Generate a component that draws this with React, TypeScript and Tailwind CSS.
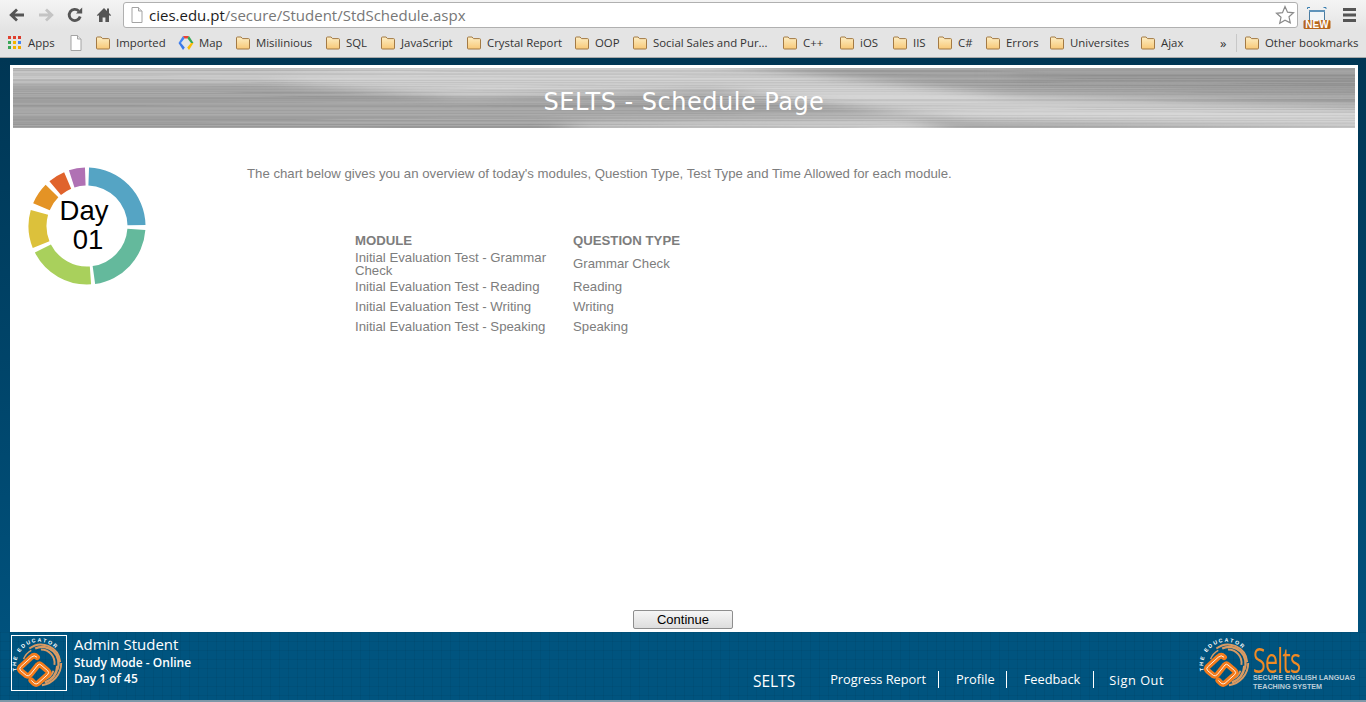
import React from 'react';

const bookmarks = [
  { label: 'Imported', cls: 'w-[83px]' },
  { label: 'Map', cls: 'w-[57px]', map: true },
  { label: 'Misilinious', cls: 'w-[90px]' },
  { label: 'SQL', cls: 'w-[55px]' },
  { label: 'JavaScript', cls: 'w-[86px]' },
  { label: 'Crystal Report', cls: 'w-[108px]' },
  { label: 'OOP', cls: 'w-[58px]' },
  { label: 'Social Sales and Pur...', cls: 'w-[150px]' },
  { label: 'C++', cls: 'w-[57px]' },
  { label: 'iOS', cls: 'w-[53px]' },
  { label: 'IIS', cls: 'w-[45px]' },
  { label: 'C#', cls: 'w-[48px]' },
  { label: 'Errors', cls: 'w-[64px]' },
  { label: 'Universites', cls: 'w-[91px]' },
  { label: 'Ajax', cls: 'w-[80px]' },
];

const rows = [
  { module: 'Initial Evaluation Test - Grammar Check', type: 'Grammar Check' },
  { module: 'Initial Evaluation Test - Reading', type: 'Reading' },
  { module: 'Initial Evaluation Test - Writing', type: 'Writing' },
  { module: 'Initial Evaluation Test - Speaking', type: 'Speaking' },
];

const segments = [
  { from: 2, to: 89, color: '#55a4c4' },
  { from: 94, to: 172, color: '#64b99c' },
  { from: 176, to: 243, color: '#a9d05c' },
  { from: 248, to: 286, color: '#dcc13b' },
  { from: 293, to: 315, color: '#e49325' },
  { from: 320, to: 337, color: '#e0632c' },
  { from: 342, to: 358, color: '#b071b4' },
];

const Folder = () => (
  <svg width="16" height="14" viewBox="0 0 16 14" className="shrink-0">
    <defs>
      <linearGradient id="fold" x1="0" y1="0" x2="0" y2="1">
        <stop offset="0" stopColor="#fdeec4" />
        <stop offset="1" stopColor="#f8c877" />
      </linearGradient>
    </defs>
    <path d="M1.5 3V2a1 1 0 0 1 1-1h3.600l1.400 1.600h6a1 1 0 0 1 1 1v8.400a1 1 0 0 1-1 1h-11a1 1 0 0 1-1-1z" fill="url(#fold)" stroke="#a37a45" />
  </svg>
);

const Page = ({ size = 16 }: { size?: number }) => (
  <svg width={size - 4} height={size} viewBox="0 0 12 16" className="shrink-0">
    <path d="M1 .5h6.500L11 4v11.500H1z" fill="#fff" stroke="#a3a3a3" />
    <path d="M7.500.5V4H11" fill="#e8e8e8" stroke="#a3a3a3" />
  </svg>
);

const AppsIcon = () => {
  const colors = ['#e0412f', '#e0412f', '#d93a2b', '#3aa757', '#f5b400', '#4285f4', '#3aa757', '#f5b400', '#f5a800'];
  return (
    <div className="grid grid-cols-3 gap-[2px] w-[13px] h-[13px] shrink-0">
      {colors.map((c, i) => (
        <svg key={i} width="3" height="3" viewBox="0 0 3 3">
          <rect width="3" height="3" fill={c} />
        </svg>
      ))}
    </div>
  );
};

const MapIcon = () => (
  <svg width="16" height="16" viewBox="0 0 16 16" className="shrink-0">
    <path d="M5 1 0.500 8 3 8 6.500 3.500z" fill="#4285f4" />
    <path d="M0.500 8 5 15 6.800 12.500 3 8z" fill="#3b78e7" />
    <path d="M5 1h6L9.500 3.500h-3z" fill="#ea4335" />
    <path d="M11 1 15.500 8 13 8 9.500 3.500z" fill="#34a853" />
    <path d="M15.500 8 11 15 9.200 12.500 13 8z" fill="#fbbc05" />
  </svg>
);

const Toolbar = () => (
  <div className="h-[30px] flex items-center bg-gradient-to-b from-[#f4f4f4] to-[#e4e4e4]">
    <div className="w-[123px] flex items-center shrink-0">
      <svg width="18" height="16" viewBox="0 0 18 16" className="ml-[8px]">
        <path d="M16 8H4M9 2.500 3.200 8 9 13.500" fill="none" stroke="#555" strokeWidth="2.800" />
      </svg>
      <svg width="18" height="16" viewBox="0 0 18 16" className="ml-[11px]">
        <path d="M2 8h12M9 2.500 14.800 8 9 13.500" fill="none" stroke="#c4c4c4" strokeWidth="2.800" />
      </svg>
      <svg width="18" height="18" viewBox="0 0 18 18" className="ml-[11px]">
        <path d="M14.200 10.500A5.600 5.600 0 1 1 12.800 5" fill="none" stroke="#555" strokeWidth="2.800" />
        <path d="M10 7.600h6.200V1.400z" fill="#555" />
      </svg>
      <svg width="16" height="16" viewBox="0 0 16 16" className="ml-[12px]">
        <path d="M8 1 0.800 8.200 2 9l1-.9V15h3.600v-4.400h2.800V15H13V8.100l1 .9 1.200-.8L13 6V1.600h-2V4z" fill="#555" />
      </svg>
    </div>
    <div className="h-[26px] w-[1175px] shrink-0 bg-white border border-[#b0b0b0] rounded-[3px] flex items-center pl-[7px] font-['Open_Sans',sans-serif] text-[15px]">
      <Page />
      <span className="ml-[6px] text-[#1c1c1c]">cies.edu.pt</span>
      <span className="text-[#777]">/secure/Student/StdSchedule.aspx</span>
      <svg width="20" height="20" viewBox="0 0 20 20" className="ml-auto mr-[2px]">
        <path d="M10 1.600l2.500 5.600 6 .6-4.500 4 1.300 6L10 15.200 4.700 18.300l1.300-6-4.500-4 6-.6z" fill="#fff" stroke="#8a8a8a" strokeWidth="1.200" />
      </svg>
    </div>
    <div className="relative w-[28px] h-[28px] ml-[5px] shrink-0">
      <svg width="28" height="28" viewBox="0 0 28 28">
        <path d="M4.500 8V6.500h2.500M20.500 6.500h2.500V8" fill="none" stroke="#3a7fb0" />
        <rect x="6.500" y="9.500" width="15" height="10" fill="#f2f5f7" stroke="#4a7ba0" />
        <rect x="6" y="9" width="16" height="2" fill="#5f93ba" />
        <rect x="0.500" y="19" width="27" height="9" rx="1.500" fill="#b8671c" />
      </svg>
      <span className="absolute left-0 right-0 top-[19px] text-center text-white font-bold text-[10px] leading-[9px] font-['Liberation_Sans',sans-serif]">NEW</span>
    </div>
    <svg width="14" height="14" viewBox="0 0 14 14" className="ml-[12px] shrink-0">
      <path d="M0 0h13v3H0zM0 5.500h13v3H0zM0 11h13v3H0z" fill="#555" />
    </svg>
  </div>
);

const BookmarksBar = () => (
  <div className="h-[28px] flex items-center bg-[#e4e4e4] border-b border-[#a8a8a8] font-['Open_Sans',sans-serif] text-[11.4px] text-[#333] whitespace-nowrap pb-[1px]">
    <div className="w-[70px] flex items-center pl-[8px] shrink-0 gap-[7px]">
      <AppsIcon />
      <span>Apps</span>
    </div>
    <div className="w-[25px] shrink-0">
      <Page />
    </div>
    {bookmarks.map((b) => (
      <div key={b.label} className={`${b.cls} flex items-center gap-[5px] shrink-0`}>
        {b.map ? <MapIcon /> : <Folder />}
        <span>{b.label}</span>
      </div>
    ))}
    <span className="w-[16px] shrink-0 text-[13px] leading-none">»</span>
    <div className="w-px h-[18px] bg-[#c8c8c8] shrink-0 mr-[7px]" />
    <div className="flex items-center gap-[5px] shrink-0">
      <Folder />
      <span>Other bookmarks</span>
    </div>
  </div>
);

// brushed metal banner, row greys come from a small seeded generator
const BannerArt = () => {
  let seed = 17;
  const rnd = () => {
    seed = (seed * 16807) % 2147483647;
    return seed / 2147483647;
  };
  const lines: React.ReactNode[] = [];
  for (let y = 0; y < 60; y++) {
    let x = -60;
    while (x < 1400) {
      const w = 200 + rnd() * 700;
      const g = 105 + Math.floor(rnd() * 100);
      lines.push(<rect key={`${y}-${x}`} x={x} y={y} width={w} height="1" fill={`rgb(${g},${g},${g})`} opacity={0.22} />);
      x += w;
    }
  }
  return (
    <svg className="absolute inset-0" width="1342" height="60" viewBox="0 0 1342 60" preserveAspectRatio="none">
      <defs>
        <filter id="soft" x="-10%" y="-50%" width="120%" height="200%">
          <feGaussianBlur stdDeviation="16 4" />
        </filter>
        <filter id="brush" x="0" y="0" width="100%" height="100%">
          <feGaussianBlur stdDeviation="18 0.2" />
        </filter>
      </defs>
      <rect width="1342" height="60" fill="#a4a4a4" />
      <g filter="url(#soft)">
        <polygon points="-40,2 250,2 520,-6 680,-6 1000,28 1380,40 1380,62 950,52 700,22 450,30 250,14 -40,14" fill="#dadada" />
        <polygon points="560,55 900,50 950,70 540,70" fill="#d4d4d4" />
        <polygon points="1000,-5 1380,-5 1380,25 1000,15" fill="#9a9a9a" />
      </g>
      <g filter="url(#brush)">{lines}</g>
    </svg>
  );
};

const arc = (from: number, to: number, r: number, R: number, c: number) => {
  const p = (a: number, rad: number) => {
    const t = (a * Math.PI) / 180;
    return `${(c + rad * Math.sin(t)).toFixed(2)} ${(c - rad * Math.cos(t)).toFixed(2)}`;
  };
  const large = to - from > 180 ? 1 : 0;
  return `M${p(from, R)}A${R} ${R} 0 ${large} 1 ${p(to, R)}L${p(to, r)}A${r} ${r} 0 ${large} 0 ${p(from, r)}Z`;
};

const DayChart = () => (
  <div className="relative w-[120px] h-[120px] font-['Liberation_Sans',sans-serif] text-black">
    <svg width="120" height="120" viewBox="0 0 120 120">
      {segments.map((s) => (
        <path key={s.from} d={arc(s.from, s.to, 40.5, 58.5, 60)} fill={s.color} />
      ))}
    </svg>
    <div className="absolute inset-0 flex flex-col items-center pt-[30px] text-[27.5px] leading-[29px]">
      <span className="-ml-[6px]">Day</span>
      <span className="ml-[2px]">01</span>
    </div>
  </div>
);

const sCurve = 'M26 22Q23 19 20 22L9 32Q7 34 9 36L15 41Q17 42 19 40L27 30Q28.500 28.500 30 30L37 36Q39 38 37 40L27 49Q25 50.500 23 49L20 46';

const Logo = ({ id }: { id: string }) => (
  <svg width="54" height="54" viewBox="0 0 56 56" className="shrink-0">
    <defs>
      <path id={id} d="M5 36A24 24 0 0 1 49 18" fill="none" />
    </defs>
    <g fill="none" stroke="#d99a63">
      <path d="M18 13A20 20 0 0 1 50 27" strokeWidth="2" />
      <path d="M24 13A17 17 0 0 1 47 35" strokeWidth="2.500" />
      <path d="M30 14A14 14 0 0 1 44 30" strokeWidth="2" />
      <path d="M51 28A23 23 0 0 1 31 51" strokeWidth="2" />
      <path d="M47 31A18 18 0 0 1 34 48" strokeWidth="2.500" />
      <path d="M43 36A15 15 0 0 1 34 45" strokeWidth="2" />
      <path d="M12 24A18 18 0 0 1 20 15" strokeWidth="1.500" />
    </g>
    <path d={sCurve} fill="none" stroke="#f47c1c" strokeWidth="6" strokeLinejoin="round" strokeLinecap="round" />
    <path d={sCurve} fill="none" stroke="#fff" strokeWidth="0.900" strokeLinejoin="round" />
    <text fontSize="5.500" fontFamily="'Liberation Sans',sans-serif" fontWeight="700" fill="#fff" letterSpacing="1.700">
      <textPath href={`#${id}`}>THE EDUCATOR</textPath>
    </text>
  </svg>
);

const Footer = () => (
  <div className="h-[68px] shrink-0 relative flex items-stretch text-white font-['Open_Sans',sans-serif] bg-[#00547f] bg-[linear-gradient(rgba(0,0,0,0.05)_1px,transparent_1px),linear-gradient(90deg,rgba(0,0,0,0.05)_1px,transparent_1px)] bg-[size:9px_9px]">
    <div className="ml-[11px] mt-[3px] w-[56px] h-[56px] border border-white flex items-center justify-center shrink-0">
      <Logo id="small-arc" />
    </div>
    <div className="ml-[7px] pt-[2px] flex flex-col shrink-0">
      <span className="text-[15px] leading-[20px]">Admin Student</span>
      <span className="text-[12px] leading-[17px] font-semibold">Study Mode - Online</span>
      <span className="text-[12px] leading-[16px] font-semibold">Day 1 of 45</span>
    </div>
    <div className="ml-auto mt-[39px] flex items-start h-[22px] text-[12.800px]">
      <span className="text-[15.500px] leading-[20px] mr-[35px]">SELTS</span>
      <span className="pr-[12px] border-r border-white h-[17px] leading-[17px]">Progress Report</span>
      <span className="pl-[17px] pr-[11px] border-r border-white h-[17px] leading-[17px]">Profile</span>
      <span className="pl-[17px] pr-[13px] border-r border-white h-[17px] leading-[17px]">Feedback</span>
      <span className="pl-[15px] leading-[19px] tracking-[0.5px]">Sign Out</span>
    </div>
    <div className="w-[156px] ml-[35px] mr-[11px] mt-[4px] shrink-0 flex overflow-hidden">
      <Logo id="big-arc" />
      <div className="flex flex-col pt-[11px] font-['Liberation_Sans',sans-serif] whitespace-nowrap text-[#bccdd8]">
        <span className="w-[48px] text-[#f08a24] text-[34px] leading-[26px] font-['Open_Sans',sans-serif] tracking-[-1px] scale-x-[0.68] origin-left">Selts</span>
        <span className="text-[7.200px] font-bold leading-[9px]">SECURE ENGLISH LANGUAGE</span>
        <span className="text-[7.200px] font-bold leading-[9px]">TEACHING SYSTEM</span>
      </div>
    </div>
  </div>
);

const App: React.FC = () => {
  return (
    <div className="h-[702px] w-[1366px] overflow-hidden flex flex-col">
      <Toolbar />
      <BookmarksBar />
      <div className="flex-1 min-h-0 flex flex-col bg-gradient-to-b from-[#003654] to-[#005582]">
        <div className="flex-1 min-h-0 flex flex-col mt-[7px] mr-[8px] ml-[10px] bg-white">
          <div className="relative h-[60px] mx-[3px] mt-[3px] shrink-0 overflow-hidden flex items-center justify-center">
            <BannerArt />
            <h1 className="relative pt-[7px] text-[24px] font-normal text-white font-['DejaVu_Sans',sans-serif] tracking-[0.5px]">
              SELTS - Schedule Page
            </h1>
          </div>
          <div className="flex-1 min-h-0 flex font-['Liberation_Sans',sans-serif] text-[#7d7d7d] text-[13.200px]">
            <div className="w-[237px] shrink-0 pt-[38px] pl-[17px]">
              <DayChart />
            </div>
            <div className="flex-1 flex flex-col pt-[38px]">
              <p className="leading-[16px]">
                The chart below gives you an overview of today's modules, Question Type, Test Type and Time Allowed for each module.
              </p>
              <table className="ml-[108px] mt-[47px] w-[345px] table-fixed">
                <thead>
                  <tr className="font-bold text-left h-[19px]">
                    <th className="w-[218px] p-0 pt-[2px]">MODULE</th>
                    <th className="p-0 pt-[2px]">QUESTION TYPE</th>
                  </tr>
                </thead>
                <tbody>
                  {rows.map((r) => (
                    <tr key={r.type} className="h-[20px]">
                      <td className="p-0 pr-[15px] leading-[13px]">{r.module}</td>
                      <td className="p-0">{r.type}</td>
                    </tr>
                  ))}
                </tbody>
              </table>
              <div className="mt-auto mb-[3px] -ml-[237px] pr-[2px] flex justify-center">
                <button className="w-[100px] h-[19px] border border-[#8e8e8e] rounded-[2px] bg-gradient-to-b from-[#f6f6f6] to-[#dddddd] text-[13px] leading-none text-black">
                  Continue
                </button>
              </div>
            </div>
          </div>
        </div>
        <Footer />
        <div className="h-[2px] bg-[#7f98a8] shrink-0" />
      </div>
    </div>
  );
};

export default App;
